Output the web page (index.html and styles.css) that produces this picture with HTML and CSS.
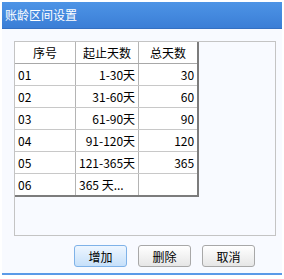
FILE: index.html
```html
<!DOCTYPE html>
<html lang="zh">
<head>
    <meta charset="UTF-8">
    <title>账龄区间设置</title>
    <link rel="stylesheet" href="styles.css">
</head>
<body>
    <div class="window">
        <div class="title-bar">账龄区间设置</div>
        <div class="content">
            <div class="panel">
                <table class="grid">
                    <tr class="head">
                        <th class="c1">序号</th>
                        <th class="c2">起止天数</th>
                        <th class="c3">总天数</th>
                    </tr>
                    <tr><td>01</td><td class="num">1-30天</td><td class="num">30</td></tr>
                    <tr><td>02</td><td class="num">31-60天</td><td class="num">60</td></tr>
                    <tr><td>03</td><td class="num">61-90天</td><td class="num">90</td></tr>
                    <tr><td>04</td><td class="num">91-120天</td><td class="num">120</td></tr>
                    <tr><td>05</td><td class="num">121-365天</td><td class="num">365</td></tr>
                    <tr><td>06</td><td>365 天...</td><td></td></tr>
                </table>
            </div>
            <div class="buttons">
                <button class="btn primary">增加</button>
                <button class="btn">删除</button>
                <button class="btn">取消</button>
            </div>
        </div>
    </div>
</body>
</html>
```

FILE: styles.css
```css
body {
    margin: 0;
    padding: 2px;
    background-color: #fff;
    font-family: "Noto Sans CJK SC", "DejaVu Sans", sans-serif;
    font-size: 12px;
    color: #000;
}

.window {
    width: 280px;
    background-color: #f8faff;
    border-bottom: 2px solid #5a9ae8;
}

.title-bar {
    height: 27px;
    line-height: 25px;
    padding-left: 3px;
    color: #fff;
    font-size: 12px;
    background: linear-gradient(#4d94e6, #3b7ed6);
    border-bottom: 1px solid #3470c2;
    box-sizing: border-box;
}

.content {
    padding: 12px 6px 6px 12px;
}

.panel {
    height: 195px;
    border: 1px solid #c4c4c4;
    box-sizing: border-box;
    background-color: #f8faff;
}

.grid {
    border-collapse: collapse;
    background-color: #fff;
    border-right: 2px solid #7c7c7c;
    border-bottom: 2px solid #7c7c7c;
}

.grid th,
.grid td {
    height: 21px;
    padding: 0 3px;
    border-right: 1px solid #b4b4b4;
    border-bottom: 1px solid #c8c8c8;
    font-weight: normal;
    text-align: left;
    white-space: nowrap;
}

.grid th {
    text-align: center;
    border-bottom: 1px solid #a8a8a8;
}

.grid .c1 { width: 54px; }
.grid .c2 { width: 53px; }
.grid .c3 { width: 52px; }

.grid td.num {
    text-align: right;
}

.buttons {
    display: flex;
    justify-content: flex-end;
    gap: 11px;
    margin-top: 9px;
    padding-right: 21px;
}

.btn {
    width: 53px;
    height: 22px;
    padding: 0;
    font-family: inherit;
    font-size: 12px;
    color: #000;
    border: 1px solid #a8a8a8;
    border-radius: 3px;
    background: linear-gradient(#ffffff, #e6e6e6);
}

.btn.primary {
    border-color: #7fb2e8;
    background: linear-gradient(#eef6ff, #c6e0fa);
}
```
